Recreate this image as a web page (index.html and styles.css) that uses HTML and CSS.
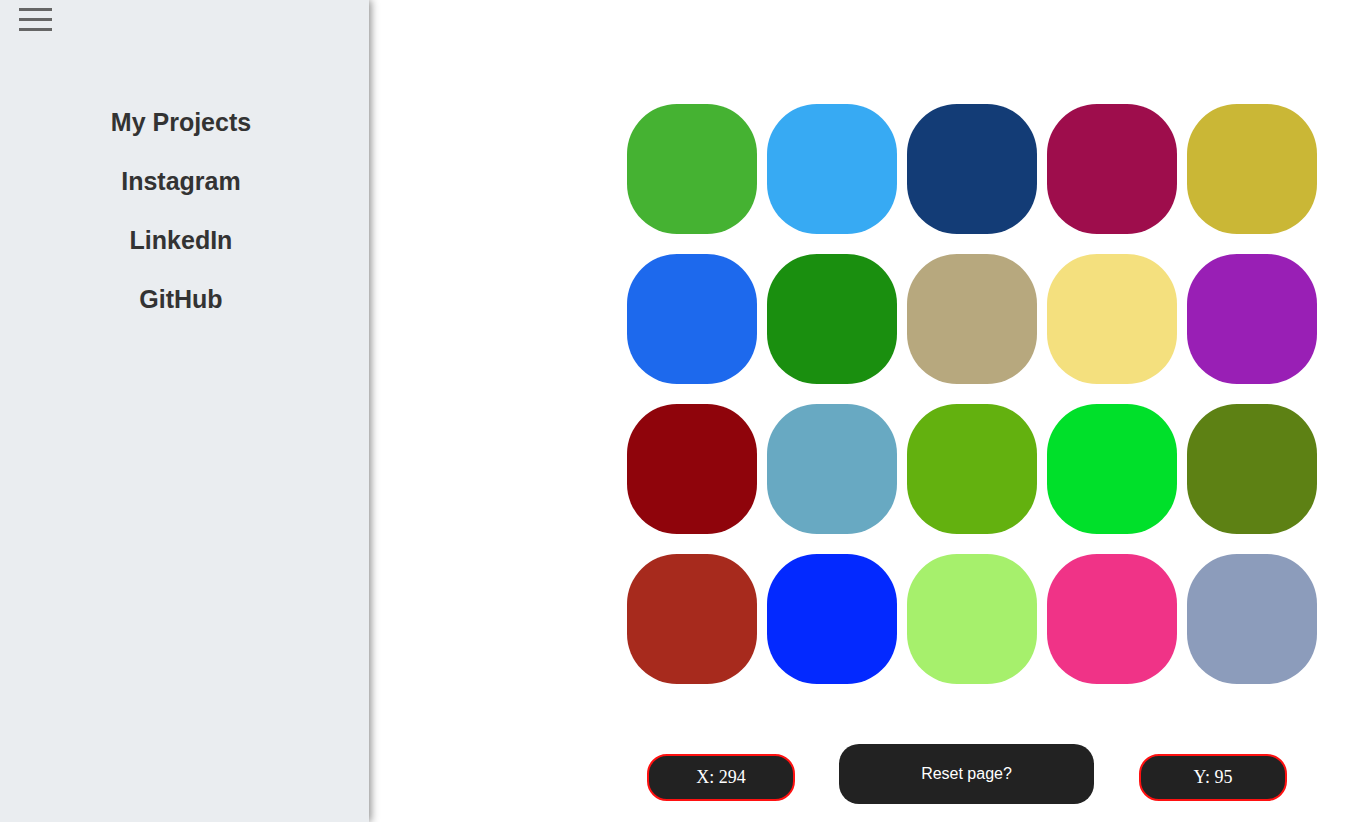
FILE: index.html
```html
<!DOCTYPE html>
<html>
<head>
<meta charset="utf-8">
<link rel="stylesheet" href="styles.css">
</head>
<body>
<div class="page">
  <aside class="sidebar">
    <div class="burger"><span></span><span></span><span></span></div>
    <nav class="nav">
      <a>My Projects</a>
      <a>Instagram</a>
      <a>LinkedIn</a>
      <a>GitHub</a>
    </nav>
  </aside>
  <main class="main">
    <div class="grid">
      <div class="tile c1"></div><div class="tile c2"></div><div class="tile c3"></div><div class="tile c4"></div><div class="tile c5"></div>
      <div class="tile c6"></div><div class="tile c7"></div><div class="tile c8"></div><div class="tile c9"></div><div class="tile c10"></div>
      <div class="tile c11"></div><div class="tile c12"></div><div class="tile c13"></div><div class="tile c14"></div><div class="tile c15"></div>
      <div class="tile c16"></div><div class="tile c17"></div><div class="tile c18"></div><div class="tile c19"></div><div class="tile c20"></div>
    </div>
    <div class="controls">
      <div class="coord">X: 294</div>
      <div class="reset">Reset page?</div>
      <div class="coord coord-y">Y: 95</div>
    </div>
  </main>
</div>
</body>
</html>
```
FILE: styles.css
```css
html, body { margin: 0; padding: 0; background: #fff; }
.page { display: flex; height: 822px; overflow: hidden; }
.sidebar {
  width: 369px; flex: none; background: #eaedf0;
  box-shadow: 2px 0 8px rgba(0,0,0,0.45);
  position: relative; z-index: 1;
  padding-top: 8px; box-sizing: border-box;
}
.burger { margin-left: 19px; width: 33px; display: flex; flex-direction: column; gap: 7px; }
.burger span { display: block; height: 3px; background: #666; }
.nav {
  width: 362px; display: flex; flex-direction: column; align-items: center;
  margin-top: 77px; gap: 31px;
  font-family: "Liberation Sans", Arial, sans-serif; font-weight: bold; font-size: 25px; color: #333;
}
.nav a { line-height: 28px; }
.main { flex: 1; padding-left: 258px; padding-top: 104px; }
.grid { display: grid; grid-template-columns: repeat(5, 130px); column-gap: 10px; row-gap: 20px; }
.tile { width: 130px; height: 130px; border-radius: 50px; }
.c1 { background: #45b232; } .c2 { background: #37aaf3; } .c3 { background: #133c76; } .c4 { background: #9e0d4c; } .c5 { background: #cab736; }
.c6 { background: #1d69ed; } .c7 { background: #1a8f0f; } .c8 { background: #b7a87e; } .c9 { background: #f4e07e; } .c10 { background: #991fb5; }
.c11 { background: #8f040b; } .c12 { background: #68a9c2; } .c13 { background: #63b10f; } .c14 { background: #00e02a; } .c15 { background: #5d8114; }
.c16 { background: #a72a1d; } .c17 { background: #0329ff; } .c18 { background: #a6f06c; } .c19 { background: #f03387; } .c20 { background: #8c9cbb; }
.controls { display: flex; align-items: flex-start; gap: 44px; margin-top: 60px; margin-left: 20px; }
.coord {
  width: 148px; height: 47px; box-sizing: border-box; border: 2px solid #ff1111; border-radius: 20px;
  background: #222; color: #fff; font-family: "Liberation Serif", "Times New Roman", serif; font-size: 18px;
  display: flex; align-items: center; justify-content: center; margin-top: 10px;
}
.coord-y { margin-left: 1px; }
.reset {
  width: 255px; height: 60px; border-radius: 20px; background: #222; color: #fff;
  font-family: "Liberation Sans", Arial, sans-serif; font-size: 16px;
  display: flex; align-items: center; justify-content: center; padding-bottom: 1px; box-sizing: border-box;
}
```
